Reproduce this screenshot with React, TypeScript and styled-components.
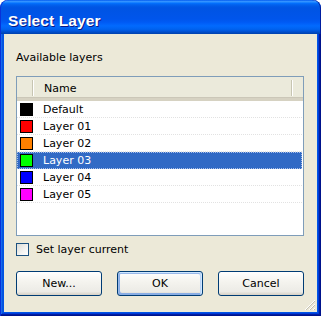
import React from "react";
import styled, { createGlobalStyle } from "styled-components";

const Global = createGlobalStyle`
  html, body { margin: 0; padding: 0; background: #ffffff; }
  body { font-family: "DejaVu Sans", "Liberation Sans", sans-serif; }
  * { box-sizing: border-box; }
`;

const Window = styled.div`
  width: 321px;
  height: 316px;
  display: flex;
  flex-direction: column;
`;

const TitleBar = styled.div`
  height: 34px;
  flex: none;
  border-radius: 8px 8px 0 0;
  padding: 7px 8px 0;
  background: linear-gradient(
    180deg,
    #0058ee 0%,
    #3593ff 4%,
    #288eff 6%,
    #127dff 8%,
    #036ffc 10%,
    #0262ee 14%,
    #0057e5 20%,
    #0054e3 24%,
    #0055eb 56%,
    #005bf5 66%,
    #026afe 76%,
    #0062ef 86%,
    #0052d6 92%,
    #0040ab 100%
  );
  box-shadow: inset 1px 0 #0831d9, inset -1px 0 #001ea0;
`;

const Title = styled.div`
  font-family: "Liberation Sans", Arial, sans-serif;
  font-weight: bold;
  font-size: 15.5px;
  line-height: 27px;
  color: #ffffff;
  text-shadow: 1px 1px #0a1883;
  letter-spacing: 0.1px;
`;

const Frame = styled.div`
  flex: 1;
  display: flex;
  padding: 0 4px 4px;
  background: #0055e5;
  box-shadow: inset 1px 0 #0831d9, inset -1px -1px #00138c, inset -2px -2px #001ea0,
    inset 2px 0 #166aee, inset -3px -3px #003bda, inset 3px 0 #0855dd;
`;

const Client = styled.div`
  position: relative;
  flex: 1;
  display: flex;
  flex-direction: column;
  padding: 16px 13px 16px 12px;
  background: #ece9d8;
  font-size: 11px;
  color: #000000;
`;

const Label = styled.div`
  height: 14px;
  line-height: 15px;
  margin-bottom: 12px;
`;

const ListBox = styled.div`
  height: 160px;
  border: 1px solid #7f9db9;
  background: #ffffff;
  display: flex;
  flex-direction: column;
  overflow: hidden;
`;

const Header = styled.div`
  height: 24px;
  flex: none;
  display: flex;
  align-items: stretch;
  background: #ebeadb;
  border-bottom: 3px solid #d6d2c2;
  box-shadow: inset 0 -1px #cbc7b8;
`;

const HeaderCell = styled.div<{ $w?: number }>`
  position: relative;
  ${(p) => (p.$w ? `width: ${p.$w}px; flex: none;` : "flex: 1;")}
  display: flex;
  align-items: center;
  padding-left: 10px;
  padding-top: 2px;
  line-height: 21px;
`;

const Sep = styled.div`
  width: 2px;
  flex: none;
  margin: 3px 0 2px;
  border-left: 1px solid #c7c5b2;
  border-right: 1px solid #ffffff;
`;

const Rows = styled.div`
  display: flex;
  flex-direction: column;
`;

const Row = styled.div<{ $sel?: boolean }>`
  height: 17px;
  display: flex;
  align-items: center;
  padding-left: 3px;
  margin-right: 1px;
  border-bottom: 1px dotted #e2e2e2;
  background: ${(p) => (p.$sel ? "#316ac5" : "transparent")};
  color: ${(p) => (p.$sel ? "#ffffff" : "#000000")};
  outline: ${(p) => (p.$sel ? "1px dotted #aac0e8" : "none")};
  outline-offset: -1px;
`;

const Swatch = styled.div<{ $c: string }>`
  width: 13px;
  height: 13px;
  flex: none;
  border: 1px solid #000000;
  background: ${(p) => p.$c};
  margin-right: 10px;
`;

const RowText = styled.span`
  line-height: 16px;
  padding-top: 2px;
`;

const CheckRow = styled.label`
  display: flex;
  align-items: center;
  height: 13px;
  margin-top: 7px;
  gap: 7px;
`;

const CheckBox = styled.span`
  width: 13px;
  height: 13px;
  flex: none;
  border: 1px solid #1c5180;
  background: linear-gradient(135deg, #dcdcd7 0%, #f4f4f2 60%, #ffffff 100%);
`;

const Buttons = styled.div`
  display: flex;
  justify-content: space-between;
  margin-top: 15px;
`;

const Button = styled.button<{ $def?: boolean }>`
  width: 86px;
  height: 25px;
  border: 1px solid #003c74;
  border-radius: 3px;
  font-family: "DejaVu Sans", sans-serif;
  font-size: 11px;
  color: #000000;
  padding: 0;
  background: linear-gradient(180deg, #ffffff 0%, #f5f4ef 40%, #ecebe6 85%, #d6d0c5 100%);
  box-shadow: ${(p) =>
    p.$def
      ? "inset -1px 1px #cee7ff, inset 1px 2px #98b8ea, inset -2px 2px #bcd4f6, inset 1px -1px #89ade4, inset 2px -2px #89ade4"
      : "none"};
`;

const Grip = styled.svg`
  position: absolute;
  right: 1px;
  bottom: 1px;
`;

const layers = [
  { name: "Default", color: "#000000" },
  { name: "Layer 01", color: "#ff0000" },
  { name: "Layer 02", color: "#ff8000" },
  { name: "Layer 03", color: "#00ff00" },
  { name: "Layer 04", color: "#0000ff" },
  { name: "Layer 05", color: "#ff00ff" },
];

export default function App() {
  return (
    <>
      <Global />
      <Window>
        <TitleBar>
          <Title>Select Layer</Title>
        </TitleBar>
        <Frame>
          <Client>
            <Label>Available layers</Label>
            <ListBox>
              <Header>
                <HeaderCell $w={15} />
                <Sep />
                <HeaderCell>Name</HeaderCell>
                <Sep />
                <HeaderCell $w={1} />
              </Header>
              <Rows>
                {layers.map((l) => (
                  <Row key={l.name} $sel={l.name === "Layer 03"}>
                    <Swatch $c={l.color} />
                    <RowText>{l.name}</RowText>
                  </Row>
                ))}
              </Rows>
            </ListBox>
            <CheckRow>
              <CheckBox />
              <span>Set layer current</span>
            </CheckRow>
            <Buttons>
              <Button>New...</Button>
              <Button $def>OK</Button>
              <Button>Cancel</Button>
            </Buttons>
            <Grip width="12" height="12" viewBox="0 0 12 12">
              <g strokeWidth="1">
                <line x1="11" y1="1" x2="1" y2="11" stroke="#ffffff" />
                <line x1="11" y1="2" x2="2" y2="11" stroke="#c5c2b2" />
                <line x1="11" y1="5" x2="5" y2="11" stroke="#ffffff" />
                <line x1="11" y1="6" x2="6" y2="11" stroke="#c5c2b2" />
                <line x1="11" y1="9" x2="9" y2="11" stroke="#ffffff" />
                <line x1="11" y1="10" x2="10" y2="11" stroke="#c5c2b2" />
              </g>
            </Grip>
          </Client>
        </Frame>
      </Window>
    </>
  );
}
